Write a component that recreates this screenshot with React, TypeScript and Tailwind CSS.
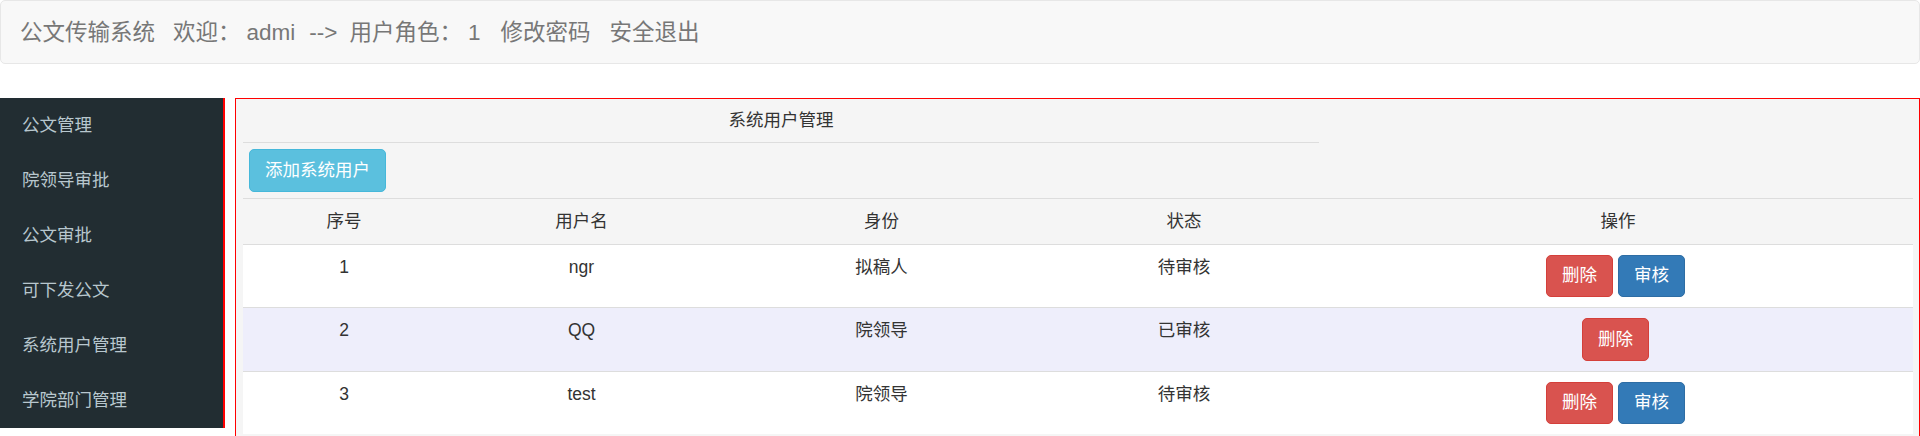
const menu = ["公文管理", "院领导审批", "公文审批", "可下发公文", "系统用户管理", "学院部门管理"];

const users = [
  { id: 1, name: "ngr", role: "拟稿人", status: "待审核", audit: true },
  { id: 2, name: "QQ", role: "院领导", status: "已审核", audit: false },
  { id: 3, name: "test", role: "院领导", status: "待审核", audit: true },
];

const font = "font-['Liberation_Sans','Noto_Sans_CJK_SC',sans-serif]";

function Btn({ color, children }: { color: "info" | "danger" | "primary"; children: React.ReactNode }) {
  const colors = {
    info: "bg-[#5bc0de] border-[#46b8da]",
    danger: "bg-[#d9534f] border-[#d43f3a]",
    primary: "bg-[#337ab7] border-[#2e6da4]",
  };
  return (
    <button
      type="button"
      className={`inline-flex items-center justify-center h-[42.5px] px-[15px] border rounded-[5px] text-white text-[17.5px] leading-[25px] ${colors[color]}`}
    >
      {children}
    </button>
  );
}

export default function App() {
  return (
    <div className={`w-[1920px] h-[436px] overflow-hidden bg-white ${font}`}>
      <nav className="h-[64px] border border-[#e7e7e7] rounded-[5px] bg-[#f8f8f8] flex items-center text-[22.5px] leading-[25px] text-[#777]">
        <span className="ml-[19px]">公文传输系统</span>
        <span className="ml-[18px]">欢迎：</span>
        <span className="ml-[6px]">admi</span>
        <span className="ml-[14px]">--&gt;</span>
        <span className="ml-[12px]">用户角色：</span>
        <span className="ml-[6px]">1</span>
        <span className="ml-[20px]">修改密码</span>
        <span className="ml-[19px]">安全退出</span>
      </nav>

      <div className="flex items-start mt-[34px]">
        <aside className="w-[225px] shrink-0 bg-[#222d32] border-r-2 border-r-[#f00]">
          {menu.map((m) => (
            <div key={m} className="h-[55px] flex items-center pl-[22px] text-[17.5px] text-[#b8c7ce]">
              {m}
            </div>
          ))}
        </aside>

        <main className="ml-[10px] flex-1 border border-[#f00] bg-[#f5f5f5] pl-[7px] pr-[6px] pb-[20px] text-[17.5px] leading-[25px] text-[#333]">
          <div className="w-[1076px] h-[44px] flex items-center justify-center border-b border-[#ddd]">
            系统用户管理
          </div>
          <div className="py-[6px] pl-[6px]">
            <Btn color="info">添加系统用户</Btn>
          </div>
          <table className="w-full table-fixed border-collapse border-t border-[#ddd]">
            <colgroup>
              <col className="w-[202px]" />
              <col className="w-[273px]" />
              <col className="w-[327px]" />
              <col className="w-[278px]" />
              <col />
            </colgroup>
            <thead>
              <tr>
                {["序号", "用户名", "身份", "状态", "操作"].map((h) => (
                  <th key={h} className="font-normal py-[10px] text-center border-b border-[#ddd]">
                    {h}
                  </th>
                ))}
              </tr>
            </thead>
            <tbody>
              {users.map((u, i) => (
                <tr key={u.id} className={`border-t border-[#ddd] ${i === 1 ? "bg-[#eeeefb]" : "bg-white"}`}>
                  <td className="align-top text-center py-[10px]">{u.id}</td>
                  <td className="align-top text-center py-[10px]">{u.name}</td>
                  <td className="align-top text-center py-[10px]">{u.role}</td>
                  <td className="align-top text-center py-[10px]">{u.status}</td>
                  <td className="align-top text-center py-[10px] pr-[5px]">
                    <div className="flex justify-center gap-[5px]">
                      <Btn color="danger">删除</Btn>
                      {u.audit && <Btn color="primary">审核</Btn>}
                    </div>
                  </td>
                </tr>
              ))}
            </tbody>
          </table>
        </main>
      </div>
    </div>
  );
}
